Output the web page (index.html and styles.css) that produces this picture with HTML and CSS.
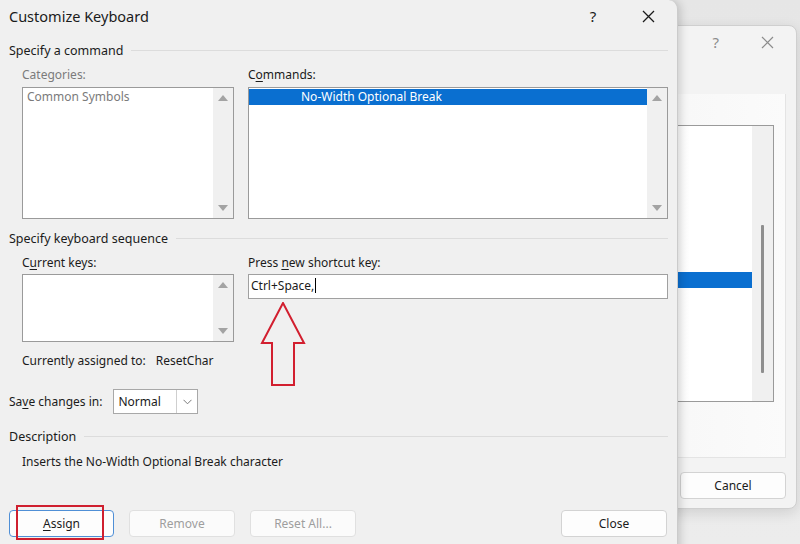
FILE: index.html
```html
<!DOCTYPE html>
<html>
<head>
<meta charset="utf-8">
<link rel="stylesheet" href="styles.css">
</head>
<body>
<div class="desk">
  <div class="win back">
    <div class="back-title">
      <span class="back-help">?</span>
      <svg class="back-x" width="13" height="13" viewBox="0 0 13 13"><path d="M1 1L12 12M12 1L1 12" stroke="#8c8c8c" stroke-width="1.2" fill="none"/></svg>
    </div>
    <div class="back-panel">
      <div class="back-list">
        <div class="back-items"><div class="back-sel"></div></div>
        <div class="back-scroll"><div class="back-thumb"></div></div>
      </div>
    </div>
    <div class="back-foot"><div class="btn back-btn">Cancel</div></div>
  </div>

  <div class="win front">
    <div class="titlebar">
      <span class="title">Customize Keyboard</span>
      <span class="help">?</span>
      <svg class="close-x" width="13" height="13" viewBox="0 0 13 13"><path d="M1 1L12 12M12 1L1 12" stroke="#1b1b1b" stroke-width="1.3" fill="none"/></svg>
    </div>
    <div class="content">
      <div class="group"><span>Specify a command</span><i class="rule"></i></div>
      <div class="cols">
        <div class="col">
          <div class="label dim">Categories:</div>
          <div class="list tall">
            <div class="items"><div class="item dim">Common Symbols</div></div>
            <div class="sbar"><i class="up"></i><i class="down"></i></div>
          </div>
        </div>
        <div class="col">
          <div class="label">C<u>o</u>mmands:</div>
          <div class="list tall">
            <div class="items"><div class="item sel">No-Width Optional Break</div></div>
            <div class="sbar"><i class="up"></i><i class="down"></i></div>
          </div>
        </div>
      </div>

      <div class="group g2"><span>Specify keyboard sequence</span><i class="rule"></i></div>
      <div class="cols">
        <div class="col">
          <div class="label l2">C<u>u</u>rrent keys:</div>
          <div class="list short">
            <div class="items"></div>
            <div class="sbar"><i class="up"></i><i class="down"></i></div>
          </div>
          <div class="assigned"><span>Currently assigned to:</span><span>ResetChar</span></div>
        </div>
        <div class="col">
          <div class="label l2">Press <u>n</u>ew shortcut key:</div>
          <div class="textbox">Ctrl+Space,<span class="caret"></span></div>
        </div>
      </div>

      <div class="saverow">
        <span>Sa<u>v</u>e changes in:</span>
        <div class="combo"><span class="combo-val">Normal</span><span class="combo-btn"><svg width="9" height="6" viewBox="0 0 9 6"><path d="M0.5 0.8L4.5 4.8L8.5 0.8" stroke="#7a7a7a" stroke-width="1" fill="none"/></svg></span></div>
      </div>

      <div class="group g3"><span>Description</span><i class="rule"></i></div>
      <div class="desc">Inserts the No-Width Optional Break character</div>

      <div class="buttons">
        <div class="btn default"><u>A</u>ssign</div>
        <div class="btn disabled">Remove</div>
        <div class="btn disabled">Reset All...</div>
        <div class="btn push">Close</div>
      </div>
    </div>
  </div>

  <svg class="arrow" width="50" height="90" viewBox="0 0 50 90">
    <path d="M24 1L3 41H13V83H35V41H45Z" fill="none" stroke="#d21f2f" stroke-width="2" stroke-linejoin="miter"/>
  </svg>
  <div class="mark"></div>
</div>
</body>
</html>
```

FILE: styles.css
```css
* { box-sizing: border-box; }
html, body { margin: 0; padding: 0; }
body {
  font-family: "Noto Sans", "Open Sans", sans-serif;
  font-size: 12px;
  color: #1b1b1b;
}
u { text-decoration: underline; text-underline-offset: 2px; text-decoration-thickness: 1px; }
.desk {
  position: relative;
  width: 800px;
  height: 544px;
  overflow: hidden;
  background: linear-gradient(180deg, #e6e6e6 0%, #ececec 100%);
}
.win { position: absolute; }

/* back window */
.back {
  left: 620px;
  top: 25px;
  width: 177px;
  height: 484px;
  background: #f3f3f3;
  border: 1px solid #cfcfcf;
  border-radius: 8px;
  box-shadow: 0 4px 14px rgba(0,0,0,0.12);
  display: flex;
  flex-direction: column;
  align-items: flex-end;
}
.back-title {
  height: 68px;
  display: flex;
  align-items: flex-start;
  padding: 7px 22px 0 0;
  gap: 42px;
}
.back-help { font-size: 15px; color: #8c8c8c; line-height: 18px; }
.back-x { margin-top: 3px; }
.back-panel {
  width: 165px;
  height: 364px;
  margin-right: 10px;
  background: linear-gradient(90deg, #f6f6f6, #fbfbfb);
  border-right: 1px solid #e4e4e4;
  border-bottom: 1px solid #e4e4e4;
  padding: 31px 11px 0 0;
}
.back-list {
  height: 277px;
  background: linear-gradient(90deg, #f0f0f0 0%, #ffffff 45%);
  border: 1px solid #9a9a9a;
  border-left: none;
  display: flex;
}
.back-items { flex: 1; padding-top: 146px; }
.back-sel { height: 16px; background: #0a6fd0; }
.back-scroll { width: 21px; background: #f0f0f0; padding: 99px 0 0 9px; }
.back-thumb { width: 3px; height: 148px; background: #8e8e8e; border-radius: 1px; }
.back-foot { padding: 14px 10px 0 0; }
.back-btn { width: 105px; }

/* front window */
.front {
  left: 0;
  top: 0;
  width: 678px;
  height: 560px;
  background: #f0f0f0;
  border-right: 1px solid #cbcbcb;
  border-radius: 0 9px 0 0;
  box-shadow: 2px 0 10px rgba(0,0,0,0.18);
}
.titlebar {
  height: 32px;
  display: flex;
  align-items: center;
  padding-left: 9px;
}
.title { font-size: 14.5px; flex: 1; }
.help { font-size: 15px; width: 14px; text-align: center; margin-right: 42px; }
.close-x { margin-right: 22px; }
.content { padding: 0 9px 0 9px; }
.group {
  display: flex;
  align-items: center;
  height: 18px;
  margin-top: 9px;
  font-size: 12.5px;
}
.group .rule { flex: 1; height: 1px; background: #dcdcdc; margin-left: 8px; }
.g2 { margin-top: 10px; }
.g3 { margin-top: 13px; }
.cols {
  display: grid;
  grid-template-columns: 212px 420px;
  column-gap: 14px;
  padding-left: 13px;
}
.label { height: 16px; line-height: 16px; margin-top: 8px; margin-bottom: 4px; }
.l2 { margin-top: 8px; margin-bottom: 3px; }
.dim { color: #7b7b7b; }
.list {
  background: #fff;
  border: 1px solid #9a9a9a;
  display: flex;
}
.tall { height: 132px; }
.short { height: 68px; }
.items { flex: 1; padding-top: 1px; }
.item { height: 16px; line-height: 16px; padding-left: 4px; }
.item.sel { background: #0a6fd0; color: #fff; padding-left: 52px; }
.sbar {
  width: 20px;
  background: #f0f0f0;
  display: flex;
  flex-direction: column;
  justify-content: space-between;
  align-items: center;
  padding: 7px 0 7px;
}
.up, .down { width: 0; height: 0; border-left: 5px solid transparent; border-right: 5px solid transparent; }
.up { border-bottom: 6px solid #a3a3a3; }
.down { border-top: 6px solid #a3a3a3; }
.textbox {
  height: 25px;
  background: #fff;
  border: 1px solid #a0a0a0;
  line-height: 22px;
  padding-left: 2px;
  font-size: 12px;
}
.caret { display: inline-block; width: 1px; height: 15px; background: #000; vertical-align: -3px; margin-left: 1px; }
.assigned {
  display: flex;
  gap: 10px;
  height: 16px;
  line-height: 16px;
  margin-top: 11px;
}
.saverow {
  display: flex;
  align-items: center;
  margin-top: 20px;
  height: 25px;
  gap: 11px;
}
.combo {
  display: flex;
  width: 85px;
  height: 25px;
  background: #fff;
  border: 1px solid #a8a8a8;
}
.combo-val { flex: 1; line-height: 23px; padding-left: 4px; }
.combo-btn { width: 21px; border-left: 1px solid #cfcfcf; display: flex; align-items: center; justify-content: center; }
.desc { margin-top: 9px; padding-left: 13px; height: 16px; line-height: 16px; }
.buttons {
  display: flex;
  gap: 15px;
  margin-top: 40px;
  padding-right: 1px;
}
.btn {
  width: 106px;
  height: 27px;
  line-height: 25px;
  text-align: center;
  background: #fdfdfd;
  border: 1px solid #d3d3d3;
  border-radius: 4px;
  color: #1b1b1b;
}
.btn.default { border-color: #4f8fd6; width: 105px; }
.btn.disabled { color: #9e9e9e; border-color: #e0e0e0; background: #fbfbfb; }
.btn.push { margin-left: auto; }

/* overlays */
.arrow { position: absolute; left: 259px; top: 302px; }
.mark {
  position: absolute;
  left: 16px;
  top: 505px;
  width: 88px;
  height: 35px;
  border: 2px solid #cf1f2f;
}
```
